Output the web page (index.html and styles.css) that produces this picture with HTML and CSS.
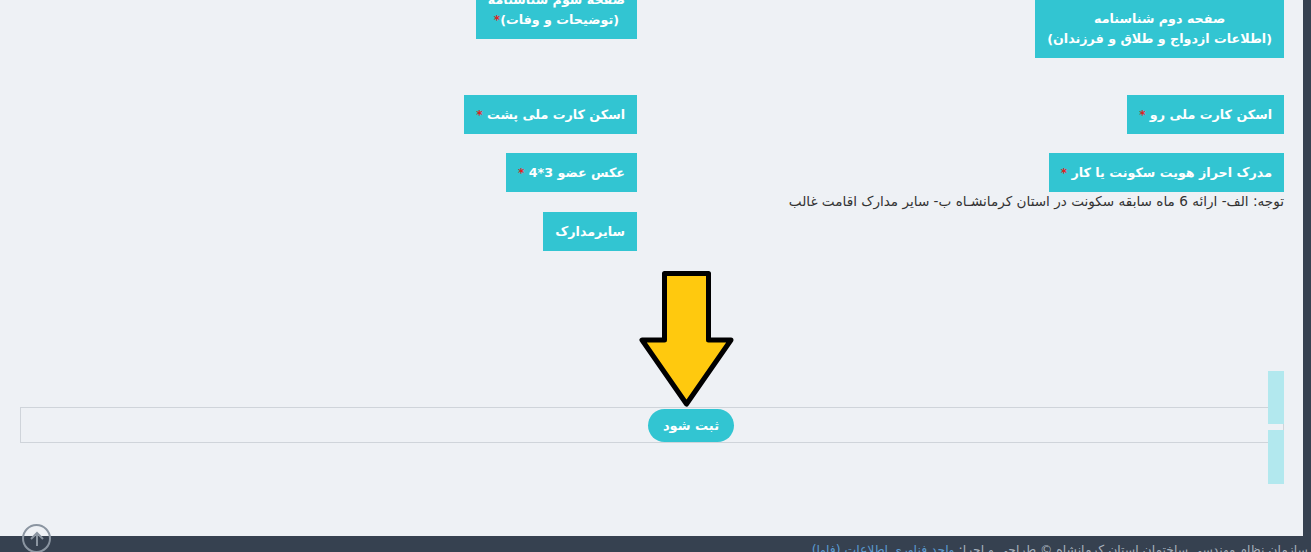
FILE: index.html
```html
<!DOCTYPE html>
<html lang="fa" dir="rtl">
<head>
    <meta charset="UTF-8">
    <meta name="viewport" content="width=device-width, initial-scale=1.0">
    <title>بارگذاری مدارک</title>
    <link rel="stylesheet" href="styles.css">
</head>
<body>
    <div class="wrap">
        <div class="sidebar"></div>
        <div class="main">
            <div class="docs">
                <div class="row row-top">
                    <div class="cell">
                        <span class="btn two push">صفحه دوم شناسنامه<br>(اطلاعات ازدواج و طلاق و فرزندان)</span>
                    </div>
                    <div class="cell">
                        <span class="btn two">صفحه سوم شناسنامه<br>(توضیحات و وفات)<i class="req">*</i></span>
                    </div>
                </div>
                <div class="row row-gap-lg">
                    <div class="cell">
                        <span class="btn">اسکن کارت ملی رو <i class="req">*</i></span>
                    </div>
                    <div class="cell">
                        <span class="btn">اسکن کارت ملی پشت <i class="req">*</i></span>
                    </div>
                </div>
                <div class="row">
                    <div class="cell">
                        <span class="btn">مدرک احراز هویت سکونت یا کار <i class="req">*</i></span>
                        <p class="note">توجه: الف- ارائه 6 ماه سابقه سکونت در استان کرمانشـاه ب- سایر مدارک اقامت غالب</p>
                    </div>
                    <div class="cell">
                        <span class="btn">عکس عضو 3*4 <i class="req">*</i></span>
                    </div>
                </div>
                <div class="row row-gap-sm">
                    <div class="cell"></div>
                    <div class="cell">
                        <span class="btn">سایرمدارک</span>
                    </div>
                </div>
            </div>

            <div class="actions">
                <button type="submit" class="btn-submit">ثبت شود</button>
            </div>

            <!-- arrow drawn over the form -->
            <svg class="arrow" width="98" height="141" viewBox="0 0 98 141">
                <polygon points="26.5,4.5 70.5,4.5 70.5,71 93,71 48.5,135 4,71 26.5,71"
                         fill="#ffc90e" stroke="#000" stroke-width="5" stroke-linejoin="round"/>
            </svg>

            <div class="side-tab tab-1"></div>
            <div class="side-tab tab-2"></div>
        </div>
    </div>

    <footer class="footer">
        سازمان نظام مهندسی ساختمان استان کرمانشاه &copy; طراحی و اجرا:
        <a href="#">واحد فناوری اطلاعات (فاوا)</a>
    </footer>

    <a href="#" class="go-top">
        <svg width="16" height="18" viewBox="0 0 16 18">
            <path d="M8 16 V3 M2 9 L8 3 L14 9" fill="none" stroke="#8b95a1" stroke-width="2"/>
        </svg>
    </a>
</body>
</html>
```

FILE: styles.css
```css
* {
    margin: 0;
    padding: 0;
    box-sizing: border-box;
}
body {
    background-color: #364150;
    font-family: "DejaVu Sans", sans-serif;
    overflow: hidden;
    height: 552px;
    position: relative;
}
.wrap {
    display: flex;
}
.sidebar {
    width: 8px;
    background-color: #364150;
}
.main {
    flex: 1;
    height: 536px;
    background-color: #eef1f5;
    padding: 0 19px 0 20px;
    position: relative;
    overflow: hidden;
}
.docs {
    margin-top: -20px;
}
.row {
    display: grid;
    grid-template-columns: 617px 617px;
    column-gap: 30px;
    margin-top: 19px;
}
.row-top {
    margin-top: 0;
}
.row-gap-lg {
    margin-top: 37px;
}
.row-gap-sm {
    margin-top: 2px;
}
.cell {
    display: flex;
    flex-direction: column;
    align-items: flex-start;
}
.btn {
    display: inline-block;
    background-color: #32c5d2;
    color: #fff;
    font-weight: bold;
    font-size: 12.7px;
    line-height: 20px;
    padding: 10px 12px 9px;
    text-align: center;
    white-space: nowrap;
}
.btn.push {
    margin-top: 19px;
}
.req {
    color: #e02222;
    font-style: normal;
    font-size: 12px;
}
.note {
    font-size: 13.6px;
    line-height: 18px;
    color: #333;
    white-space: nowrap;
}
.actions {
    margin-top: 156px;
    height: 36px;
    border: 1px solid #cfd4da;
    display: flex;
    justify-content: center;
    align-items: center;
    padding-left: 78px;
}
.btn-submit {
    border: none;
    background-color: #32c5d2;
    color: #fff;
    font-family: inherit;
    font-weight: bold;
    font-size: 13px;
    height: 33px;
    padding: 0 15px;
    border-radius: 17px;
}
.arrow {
    position: absolute;
    left: 638px;
    top: 269px;
}
.side-tab {
    position: absolute;
    left: 1268px;
    width: 16px;
    background-color: #b2e8ee;
}
.tab-1 {
    top: 371px;
    height: 53px;
}
.tab-2 {
    top: 430px;
    height: 54px;
}
.footer {
    height: 16px;
    padding: 5px 3px 0 0;
    color: #a7b1bd;
    font-size: 12.4px;
    line-height: 18px;
    white-space: nowrap;
}
.footer a {
    color: #5b9bd1;
    text-decoration: none;
}
.go-top {
    position: absolute;
    left: 22px;
    top: 524px;
    width: 29px;
    height: 29px;
    border: 2px solid #8b95a1;
    border-radius: 50%;
    display: flex;
    align-items: center;
    justify-content: center;
}
```
